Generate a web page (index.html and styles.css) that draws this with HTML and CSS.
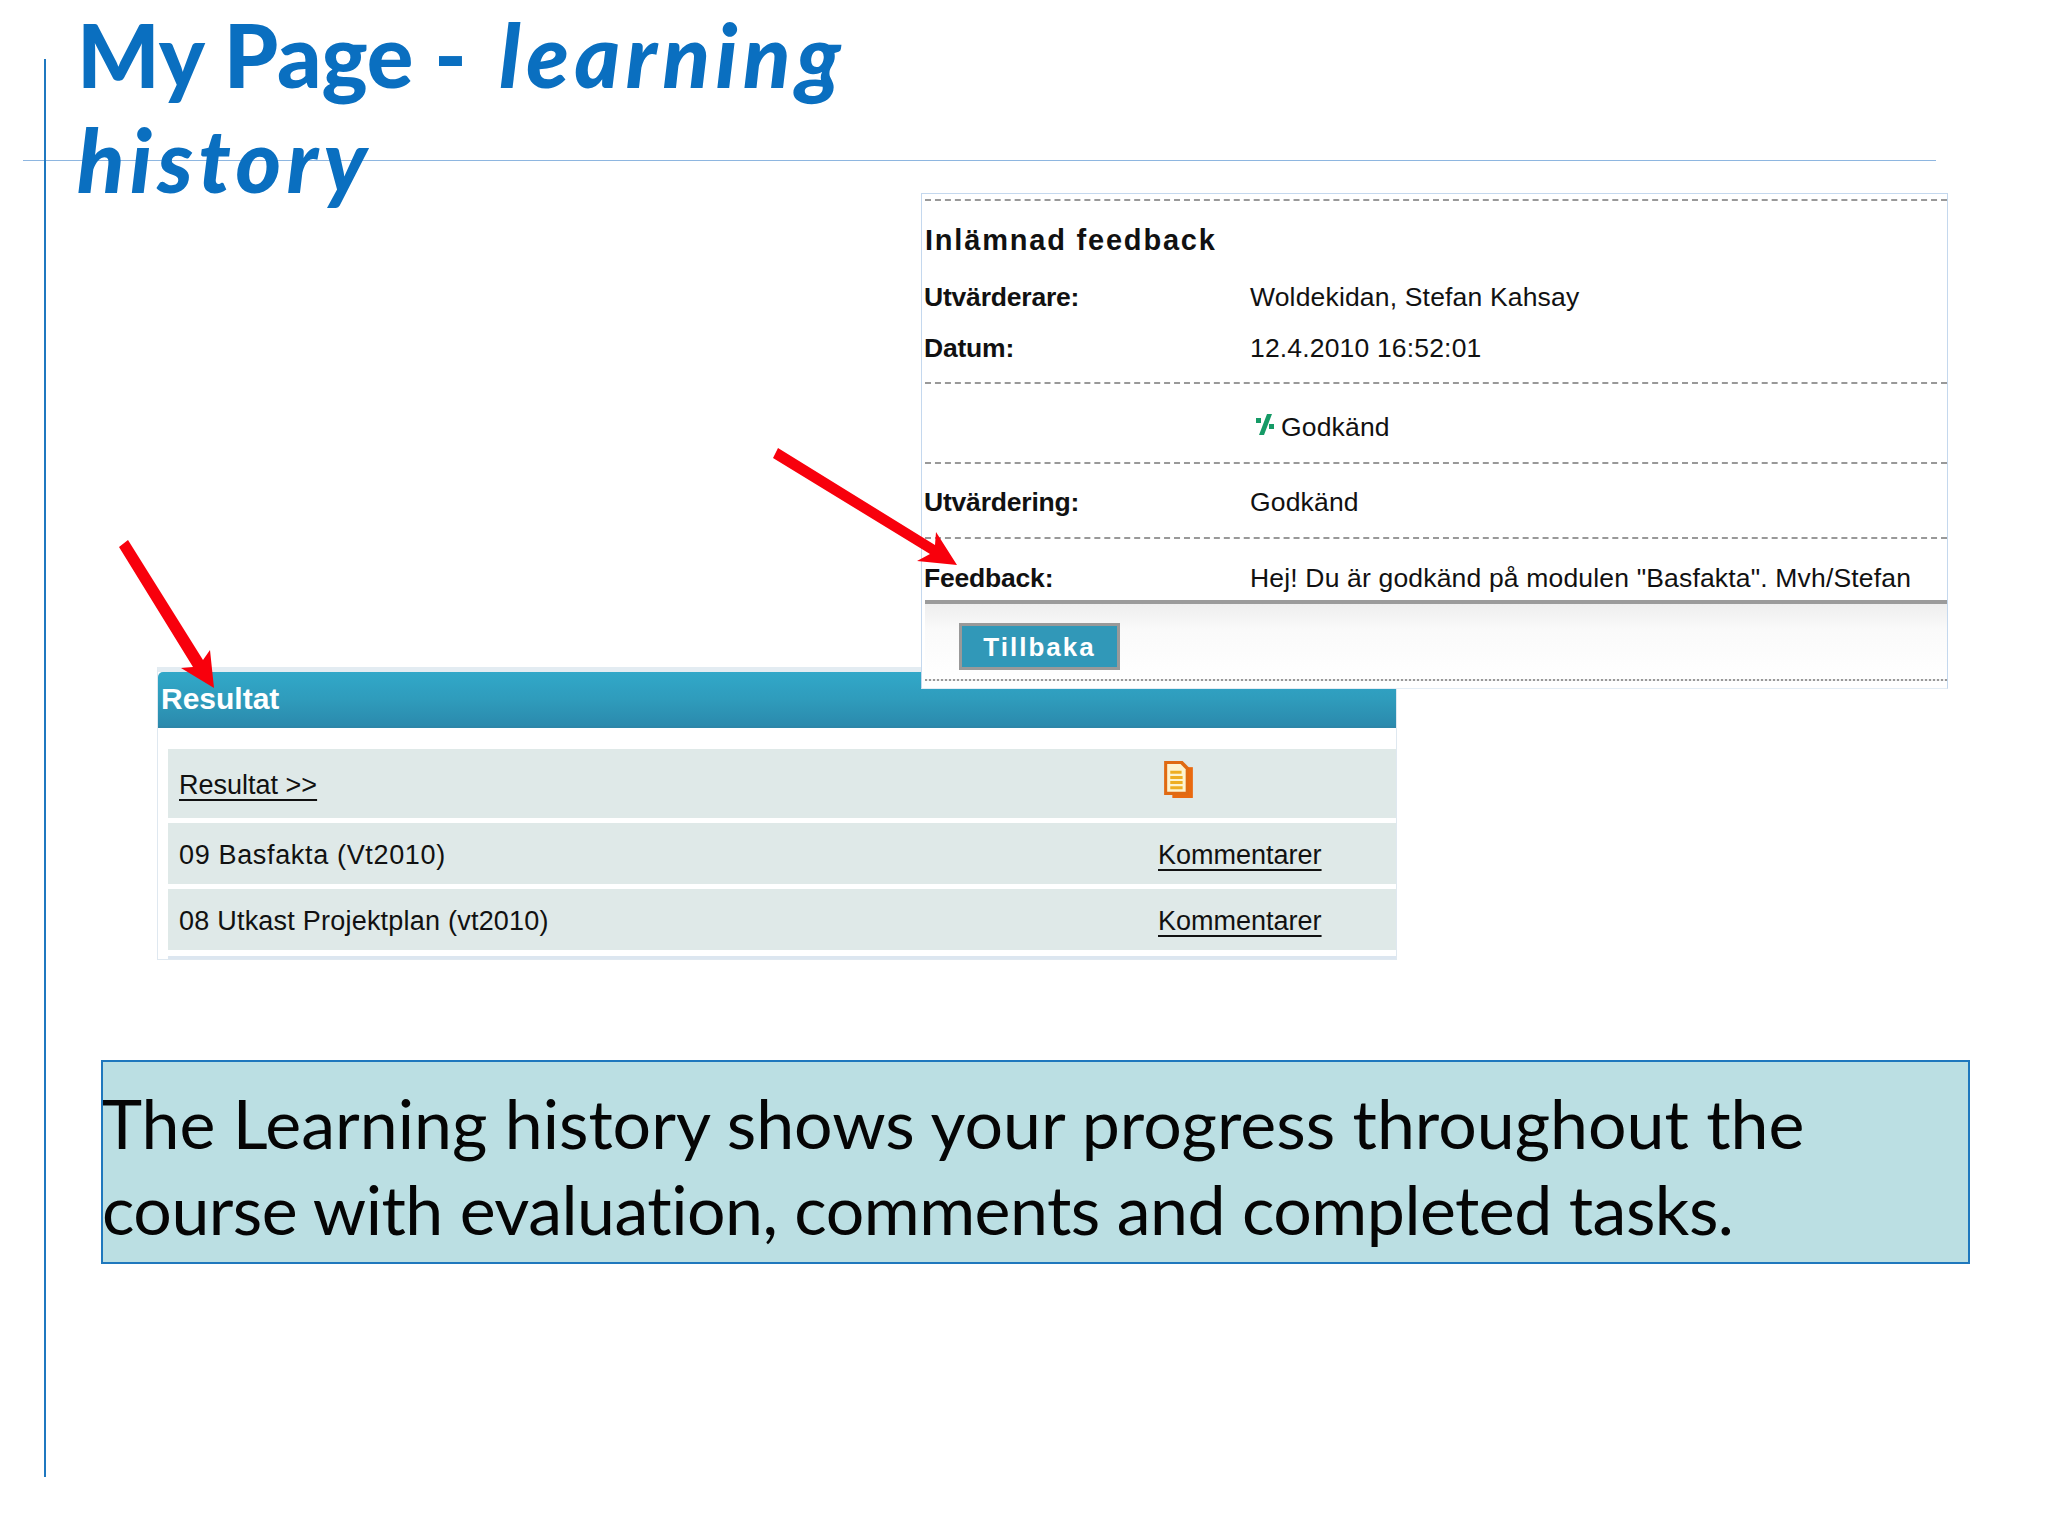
FILE: index.html
```html
<!DOCTYPE html>
<html lang="en">
<head>
<meta charset="utf-8">
<title>My Page - learning history</title>
<link rel="stylesheet" href="styles.css">
</head>
<body>
<main class="slide">
  <div class="rule-h"></div>
  <div class="rule-v"></div>
  <h1 class="title">My Page - <em>learning<br>history</em></h1>

  <section class="results">
    <h2 class="results-head">Resultat</h2>
    <div class="results-rows">
      <div class="result-row row-first">
        <a class="shot-link link-first">Resultat &gt;&gt;</a>
        <svg class="doc-icon" viewBox="0 0 29 37" aria-hidden="true">
          <path d="M4 3h20v30H4z" fill="#e9690f" transform="translate(4 3)"/>
          <path d="M0 0h18l6 6v27H0z" fill="#e06a12"/>
          <path d="M3 3h13l5 5v22H3z" fill="#fdf3d0"/>
          <path d="M6 11h11M6 16h12M6 21h12M6 26h12" stroke="#eeae22" stroke-width="3" fill="none"/>
        </svg>
      </div>
      <div class="result-row row-text">
        <span class="name-wide">09 Basfakta (Vt2010)</span>
        <a class="shot-link">Kommentarer</a>
      </div>
      <div class="result-row row-text">
        <span class="name-narrow">08 Utkast Projektplan (vt2010)</span>
        <a class="shot-link">Kommentarer</a>
      </div>
    </div>
  </section>

  <section class="feedback">
    <h2 class="feedback-head">Inlämnad feedback</h2>
    <div class="fb-row row-a"><b>Utvärderare:</b><span>Woldekidan, Stefan Kahsay</span></div>
    <div class="fb-row row-b"><b>Datum:</b><span>12.4.2010 16:52:01</span></div>
    <div class="fb-row row-c">
      <b></b>
      <span class="status">
        <svg class="check" viewBox="0 0 18 24" aria-hidden="true">
          <path d="M11 1h5l-8 21H3zM0 5h5v5H0zM13 11h5v5h-5z" fill="#159a66"/>
        </svg>
        Godkänd
      </span>
    </div>
    <div class="fb-row row-d"><b>Utvärdering:</b><span>Godkänd</span></div>
    <div class="fb-row row-e"><b>Feedback:</b><span>Hej! Du är godkänd på modulen "Basfakta". Mvh/Stefan</span></div>
    <div class="fb-foot"><button class="back-btn">Tillbaka</button></div>
  </section>

  <div class="callout">
    <span class="callout-line">The Learning history shows your progress throughout the</span>
    <span class="callout-line line-tight">course with evaluation, comments and completed tasks.</span>
  </div>

  <svg class="arrows" viewBox="0 0 2048 1536" aria-hidden="true">
    <path d="M128 540L119 547L193 667L181 668L214 688L210 650L203 660Z" fill="#f8000c"/>
    <path d="M778 448L773 458L930 554L917 561L957 565L936 532L935 545Z" fill="#f8000c"/>
  </svg>
</main>
</body>
</html>
```
FILE: styles.css
```css
* { box-sizing: border-box; }
html, body { margin: 0; padding: 0; background: #fff; }
.slide {
  position: relative;
  width: 2048px;
  height: 1536px;
  overflow: hidden;
  background: #fff;
  font-family: "Liberation Sans", Arial, sans-serif;
  color: #111;
}
.rule-h { position: absolute; left: 23px; top: 160px; width: 1913px; height: 1px; background: #8eb6e0; }
.rule-v { position: absolute; left: 44px; top: 59px; width: 2px; height: 1418px; background: #1f78c0; }
.title {
  position: absolute;
  left: 77px;
  top: 2px;
  margin: 0;
  font: 900 87px/105px Lato, sans-serif;
  font-variant-ligatures: none;
  color: #0a6fc0;
  white-space: nowrap;
}
.title em { font-style: italic; letter-spacing: 5.6px; margin-left: 12px; }

.results {
  position: absolute;
  left: 157px;
  top: 667px;
  width: 1240px;
  height: 293px;
  border: 1px solid #dfe8f0;
  border-top: 5px solid #e3ecf2;
  background: #fff;
}
.results-head {
  margin: 0;
  height: 56px;
  padding: 9px 0 0 3px;
  font-size: 30px;
  line-height: 36px;
  font-weight: 700;
  color: #fff;
  background: linear-gradient(#31a8c9, #2f9cbc 50%, #2b8aad);
  border-bottom: 2px solid #2d86a8;
  border-top-left-radius: 5px;
}
.results-rows {
  display: flex;
  flex-direction: column;
  gap: 5px;
  margin: 21px 0 0 10px;
  border-bottom: 3px solid #dce6f0;
  padding-bottom: 6px;
}
.result-row {
  display: grid;
  grid-template-columns: 979px 1fr;
  align-items: center;
  height: 61px;
  padding-left: 11px;
  background: #dfe9e8;
  font-size: 27px;
}
.row-first { height: 69px; }
.row-text { padding-top: 4px; }
.name-wide { letter-spacing: .66px; }
.name-narrow { letter-spacing: .22px; }
.shot-link { color: #111; text-decoration: underline; text-underline-offset: 5px; text-decoration-thickness: 2px; letter-spacing: 0; }
.link-first { padding-top: 4px; }
.doc-icon { width: 30px; height: 38px; margin-left: 6px; margin-top: -8px; }

.feedback {
  position: absolute;
  left: 921px;
  top: 193px;
  width: 1027px;
  height: 496px;
  background: #fff;
  border: 1px solid #c4d8ee;
  border-bottom-color: #e3ecf4;
  padding-left: 3px;
}
.feedback-head {
  margin: 5px 0 0;
  height: 78px;
  border-top: 2px dashed #999;
  padding-top: 22px;
  font-size: 29px;
  line-height: 34px;
  letter-spacing: 1.8px;
  font-weight: 700;
  color: #111;
}
.fb-row {
  display: grid;
  grid-template-columns: 325px 1fr;
  font-size: 26.5px;
  line-height: 32px;
  letter-spacing: .17px;
}
.fb-row b { letter-spacing: -.2px; margin-left: -1px; }
.row-a { height: 51px; padding-top: 4px; }
.row-b { height: 54px; padding-top: 4px; }
.row-c { height: 80px; border-top: 2px dashed #999; padding-top: 27px; }
.row-d { height: 75px; border-top: 2px dashed #999; padding-top: 22px; }
.row-e { height: 63px; border-top: 2px dashed #999; padding-top: 23px; }
.status { display: flex; align-items: center; gap: 7px; margin-left: 6px; align-self: start; }
.check { width: 18px; height: 24px; margin-top: -4px; }
.fb-foot {
  height: 81px;
  border-top: 4px solid #9b9b9b;
  border-bottom: 2px dotted #999;
  padding: 19px 0 0 34px;
  background: linear-gradient(#eeeeee, #fafafa 35%, #fff);
}
.back-btn {
  display: block;
  width: 161px;
  height: 47px;
  padding: 0;
  border: 3px solid #999;
  background: #3198b8;
  color: #fff;
  font: 700 26px/40px "Liberation Sans", Arial, sans-serif;
  letter-spacing: 2px;
}

.callout {
  position: absolute;
  left: 101px;
  top: 1060px;
  width: 1869px;
  height: 204px;
  border: 2px solid #1f78bd;
  background: #bbdfe3;
  color: #050505;
  padding: 18px 0 0 0;
  font: 400 68px/86px Lato, sans-serif;
  font-variant-ligatures: none;
  white-space: nowrap;
}
.callout-line { display: block; margin-left: -1px; }
.line-tight { letter-spacing: -.5px; }
.arrows { position: absolute; left: 0; top: 0; width: 2048px; height: 1536px; pointer-events: none; }
```
